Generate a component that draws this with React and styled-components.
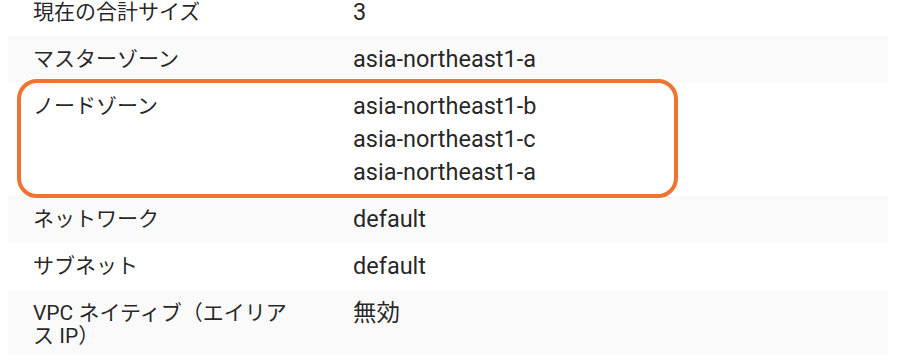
import React from 'react'
import styled, { createGlobalStyle } from 'styled-components'

const GlobalStyle = createGlobalStyle`
  html, body {
    margin: 0;
    padding: 0;
    background: #ffffff;
  }
  body {
    font-family: Roboto, "Noto Sans CJK JP", "Noto Sans", sans-serif;
    color: rgba(0, 0, 0, 0.87);
    -webkit-font-smoothing: antialiased;
  }
`

const details = [
  { label: '現在の合計サイズ', values: ['3'] },
  { label: 'マスターゾーン', values: ['asia-northeast1-a'] },
  {
    label: 'ノードゾーン',
    values: ['asia-northeast1-b', 'asia-northeast1-c', 'asia-northeast1-a'],
    marked: true,
  },
  { label: 'ネットワーク', values: ['default'] },
  { label: 'サブネット', values: ['default'] },
  { label: 'VPC ネイティブ（エイリアス IP）', values: ['無効'] },
]

const Page = styled.div`
  padding-left: 8px;
  width: 880px;
  margin-top: -11px;
`

const Table = styled.div`
  display: flex;
  flex-direction: column;
`

const Row = styled.div`
  position: relative;
  display: grid;
  grid-template-columns: 320px 1fr;
  padding: 7px 0 7px 25px;
  background: ${(p) => (p.$shaded ? '#fafafa' : '#ffffff')};
`

const Label = styled.div`
  box-sizing: border-box;
  padding-right: 55px;
  margin-top: 5px;
  font-size: 21px;
  line-height: 23px;
`

const Values = styled.div`
  display: flex;
  flex-direction: column;
`

const Value = styled.div`
  font-size: 23.5px;
  line-height: 33px;
  white-space: nowrap;
`

const Marker = styled.div`
  position: absolute;
  z-index: 1;
  top: -4px;
  bottom: -2px;
  left: 9px;
  width: 661px;
  box-sizing: border-box;
  border: 4px solid #ef7431;
  border-radius: 20px;
  pointer-events: none;
`

const App = () => {
  return (
    <Page>
      <GlobalStyle />
      <Table>
        {details.map((d, i) => (
          <Row key={d.label} $shaded={i % 2 === 1}>
            <Label>{d.label}</Label>
            <Values>
              {d.values.map((v, j) => (
                <Value key={j}>{v}</Value>
              ))}
            </Values>
            {d.marked && <Marker />}
          </Row>
        ))}
      </Table>
    </Page>
  )
}

export default App
